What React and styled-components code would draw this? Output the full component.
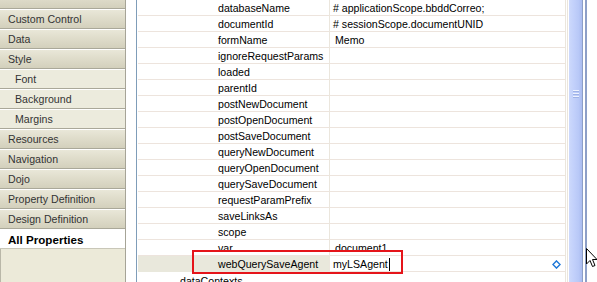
import React from 'react';
import styled, { createGlobalStyle } from 'styled-components';

const GlobalStyle = createGlobalStyle`
  html, body {
    margin: 0;
    padding: 0;
    background: #ffffff;
    overflow: hidden;
  }
  body {
    font-family: "Liberation Sans", Arial, sans-serif;
    font-size: 10.6px;
    color: #000;
  }
`;

const categories = [
  { label: '' },
  { label: 'Custom Control' },
  { label: 'Data' },
  { label: 'Style' },
  { label: 'Font', sub: true },
  { label: 'Background', sub: true },
  { label: 'Margins', sub: true },
  { label: 'Resources' },
  { label: 'Navigation' },
  { label: 'Dojo' },
  { label: 'Property Definition' },
  { label: 'Design Definition' },
  { label: 'All Properties', active: true },
];

const properties = [
  { name: 'databaseName', value: '# applicationScope.bbddCorreo;' },
  { name: 'documentId', value: '# sessionScope.documentUNID' },
  { name: 'formName', value: 'Memo', literal: true },
  { name: 'ignoreRequestParams' },
  { name: 'loaded' },
  { name: 'parentId' },
  { name: 'postNewDocument' },
  { name: 'postOpenDocument' },
  { name: 'postSaveDocument' },
  { name: 'queryNewDocument' },
  { name: 'queryOpenDocument' },
  { name: 'querySaveDocument' },
  { name: 'requestParamPrefix' },
  { name: 'saveLinksAs' },
  { name: 'scope' },
  { name: 'var', value: 'document1', literal: true },
];

const App = () => (
  <>
    <GlobalStyle />
    <Screen>
      <Sidebar>
        <CategoryList>
          {categories.map((c, i) => (
            <Category key={i} $sub={c.sub} $active={c.active}>
              {c.label}
            </Category>
          ))}
        </CategoryList>
        <Filler />
      </Sidebar>
      <Spacer />
      <Editor>
        <Table>
          {properties.map((p) => (
            <Row key={p.name}>
              <NameCell>{p.name}</NameCell>
              <ValueCell $literal={p.literal}>{p.value}</ValueCell>
            </Row>
          ))}
          <Row>
            <NameCell $selected>webQuerySaveAgent</NameCell>
            <ValueCell>
              <EditText>myLSAgent</EditText>
              <Caret />
              <Diamond viewBox="0 0 10 10" aria-hidden="true">
                <path d="M5 1 L9 5 L5 9 L1 5 Z" fill="#fff" stroke="#1f78d8" strokeWidth="1.6" />
              </Diamond>
            </ValueCell>
          </Row>
          <GroupRow>dataContexts</GroupRow>
        </Table>
        <TableEdge />
        <ScrollBar>
          <Grip>
            <span />
            <span />
            <span />
          </Grip>
        </ScrollBar>
        <ScrollEdge />
      </Editor>
      <Highlight />
      <Pointer viewBox="0 0 12 20" aria-hidden="true">
        <path
          d="M0.5 0.5 L0.5 16 L4 12.5 L6.5 18.5 L9 17.5 L6.5 11.5 L11 11.5 Z"
          fill="#fff"
          stroke="#000"
          strokeWidth="1"
          strokeLinejoin="miter"
        />
      </Pointer>
    </Screen>
  </>
);

export default App;

const Screen = styled.div`
  position: relative;
  display: flex;
  width: 597px;
  height: 282px;
  overflow: hidden;
  background: #fff;
`;

const Sidebar = styled.aside`
  width: 125px;
  flex: none;
  display: flex;
  flex-direction: column;
  border-right: 1px solid #a6a497;
  overflow: hidden;
`;

const CategoryList = styled.div`
  display: flex;
  flex-direction: column;
  margin-top: -11px;
`;

const Category = styled.div`
  height: 18px;
  line-height: 19px;
  padding-left: ${(p) => (p.$sub ? 15 : 8)}px;
  border-top: 1px solid #ffffff;
  border-bottom: 1px solid ${(p) => (p.$active ? '#c9c7b8' : '#aaa899')};
  color: ${(p) => (p.$active ? '#000' : '#333')};
  font-weight: ${(p) => (p.$active ? 'bold' : 'normal')};
  font-size: ${(p) => (p.$active ? '11.6px' : '10.6px')};
  white-space: nowrap;
  background: ${(p) =>
    p.$active
      ? '#ffffff'
      : p.$sub
      ? '#ecebdd'
      : 'linear-gradient(to bottom, #e9e7d8 0%, #dcd9c7 60%, #d3d0bc 100%)'};
`;

const Filler = styled.div`
  flex: 1;
  background: #ecead9;
  border-left: 1px solid #b9b7a8;
`;

const Spacer = styled.div`
  width: 10px;
  flex: none;
`;

const Editor = styled.main`
  flex: 1;
  display: flex;
  border-left: 1px solid #7f9db9;
`;

const Table = styled.div`
  width: 427px;
  flex: none;
  display: flex;
  flex-direction: column;
  padding-left: 1px;
  border-right: 1px solid #ebe6dd;
`;

const Row = styled.div`
  display: grid;
  grid-template-columns: 191px 1fr;
  height: 15px;
  border-bottom: 1px solid #ede4dd;
`;

const NameCell = styled.div`
  padding-left: 80px;
  line-height: 16px;
  white-space: nowrap;
  background: ${(p) => (p.$selected ? '#e9e8dc' : 'transparent')};
`;

const ValueCell = styled.div`
  position: relative;
  display: flex;
  align-items: center;
  padding-left: ${(p) => (p.$literal ? 5 : 3)}px;
  line-height: 16px;
  white-space: nowrap;
  border-left: 1px solid #ebe6dd;
`;

const EditText = styled.span`
  line-height: 16px;
`;

const Caret = styled.span`
  width: 1px;
  height: 13px;
  margin-left: 1px;
  background: #000;
`;

const Diamond = styled.svg`
  width: 9px;
  height: 9px;
  margin-left: auto;
  margin-right: 4px;
`;

const GroupRow = styled.div`
  padding-left: 42px;
  line-height: 16px;
  margin-top: 1px;
`;

const TableEdge = styled.div`
  width: 1px;
  margin-left: 1px;
  background: #ebe6dd;
`;

const ScrollBar = styled.div`
  width: 13px;
  margin-left: 1px;
  display: flex;
  align-items: flex-start;
  justify-content: center;
  background: linear-gradient(to right, #cdd9fb 0%, #c3d1fb 35%, #b8c8f7 75%, #a9bbef 100%);
`;

const Grip = styled.div`
  margin-top: 90px;
  display: flex;
  flex-direction: column;
  gap: 1px;

  span {
    display: block;
    width: 6px;
    height: 1px;
    background: #eef2fe;
    border-bottom: 1px solid #9fb2e6;
  }
`;

const ScrollEdge = styled.div`
  width: 1px;
  margin-left: 0;
  border-left: 1px solid #8d9fc7;
  border-right: 1px solid #ffffff;
  box-shadow: 2px 0 0 #8d9fc7;
`;

const Highlight = styled.div`
  position: absolute;
  left: 192px;
  top: 250px;
  width: 211px;
  height: 24px;
  box-sizing: border-box;
  border: 2px solid #e5141a;
  pointer-events: none;
`;

const Pointer = styled.svg`
  position: absolute;
  left: 586px;
  top: 248px;
  width: 12px;
  height: 20px;
`;
